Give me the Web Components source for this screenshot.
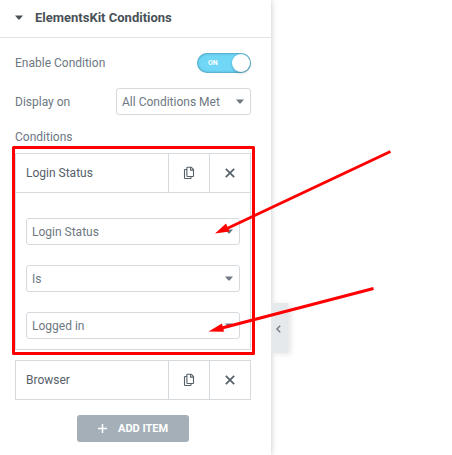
<!DOCTYPE html>
<html lang="en">
<head>
<meta charset="utf-8">
<title>ElementsKit Conditions</title>
<style>
html,body{margin:0;height:100%;overflow:hidden;background:#fff}
body{font-family:Roboto,"Liberation Sans",sans-serif;font-size:12px;color:#6d7882;position:relative}
</style>
</head>
<body>
<ek-panel heading="ElementsKit Conditions">
  <ek-field label="Enable Condition" style="margin-top:15px;height:20px"><ek-switch>ON</ek-switch></ek-field>
  <ek-field label="Display on" style="margin-top:15px;height:27px"><ek-select style="width:135px;--indent:5px">All Conditions Met</ek-select></ek-field>
  <ek-field label="Conditions" style="margin-top:14px;height:16px"></ek-field>
  <ek-item heading="Login Status" style="margin-top:8px">
    <ek-select>Login Status</ek-select>
    <ek-select>Is</ek-select>
    <ek-select>Logged in</ek-select>
  </ek-item>
  <ek-item heading="Browser" style="margin-top:10px"></ek-item>
  <ek-button>ADD ITEM</ek-button>
</ek-panel>
<ek-collapse></ek-collapse>
<ek-annotations></ek-annotations>
<script>
function define(name, html) {
  customElements.define(name, class extends HTMLElement {
    constructor() {
      super();
      const root = this.attachShadow({ mode: 'open' });
      const t = document.createElement('template');
      t.innerHTML = html;
      root.append(t.content.cloneNode(true));
      for (const el of root.querySelectorAll('[data-attr]'))
        el.textContent = this.getAttribute(el.dataset.attr) || '';
      if (this.childElementCount) root.querySelector('.body')?.removeAttribute('hidden');
    }
  });
}

define('ek-panel', `<style>
:host{display:block;box-sizing:border-box;width:271px;height:455px;background:#fff;box-shadow:0 0 6px rgba(0,0,0,.23)}
header{display:flex;align-items:center;box-sizing:border-box;height:38px;padding:0 0 3px 15px;border-bottom:1px solid #e1e4e7;color:#495157;font-weight:700;font-size:13px}
svg{width:8px;height:5px;margin-right:12px}
main{display:flex;flex-direction:column;padding:0 20px 0 15px}
</style>
<header><svg viewBox="0 0 8 5"><path d="M0 .5h8L5 4Q4 5 3 4Z" fill="#495157"/></svg><span data-attr="heading"></span></header>
<main><slot></slot></main>`);

define('ek-field', `<style>
:host{display:flex;align-items:center;justify-content:space-between}
</style><span data-attr="label"></span><slot></slot>`);

define('ek-switch', `<style>
:host{display:flex;align-items:center;justify-content:space-between;box-sizing:border-box;width:54px;height:20px;border-radius:10px;padding:0 1px 0 11px;background:#71d7f7;box-shadow:inset 0 0 2px 1px rgba(40,110,135,.45);color:#fff;font-size:7px;font-weight:700}
i{width:18px;height:18px;border-radius:50%;background:#fff;box-shadow:0 1px 3px rgba(0,0,0,.25)}
</style><span><slot></slot></span><i></i>`);

define('ek-select', `<style>
:host{display:flex;align-items:center;justify-content:space-between;box-sizing:border-box;height:27px;border:1px solid #d5dadf;border-radius:3px;padding:0 6px 0 var(--indent,5px);background:#fff}
svg{width:8px;height:5px}
</style><span><slot></slot></span><svg viewBox="0 0 8 5"><path d="M0 .5h8L5 4Q4 5 3 4Z" fill="#6d7882"/></svg>`);

define('ek-item', `<style>
:host{display:block;border:1px solid #d5dadf}
.head{display:grid;grid-template-columns:1fr 41px 41px;height:38px;color:#556068}
.head>*{display:flex;align-items:center;justify-content:center}
.head>.title{justify-content:flex-start;padding-left:10px}
.tool{border-left:1px solid #d5dadf}
.body{display:grid;gap:20px;padding:25px 10px 10px;border-top:1px solid #d5dadf}
.body[hidden]{display:none}
</style>
<div class="head"><span class="title" data-attr="heading"></span>
<span class="tool"><svg width="12" height="14" viewBox="0 0 12 14" fill="none" stroke="#556068" stroke-width="1.1"><path d="M4.5 1.2h3.800l2.200 2.200v6.500q0 .6-.6.6H4.500q-.6 0-.6-.6V1.800q0-.6.6-.6ZM7.600 1.200v2.900h2.900M3.900 3.500H2.100q-.6 0-.6.6v7.800q0 .6.6.6h5.300q.6 0 .6-.6v-1.400"/></svg></span>
<span class="tool"><svg width="10" height="10" viewBox="0 0 10 10"><path d="M.8.8l8.400 8.400M9.200.8L.8 9.200" stroke="#556068" stroke-width="1.700"/></svg></span></div>
<div class="body" hidden><slot></slot></div>`);

define('ek-button', `<style>
:host{display:flex;align-items:center;align-self:center;box-sizing:border-box;width:112px;height:27px;margin:15px 0 0 0;padding-left:21px;gap:11px;border-radius:3px;background:#a4afb7;color:#fff;font-size:11px;font-weight:700}
svg{margin-top:-1px}
</style><svg width="9" height="9" viewBox="0 0 9 9"><path d="M4.5 0v9M0 4.5h9" stroke="#fff" stroke-width="1.5"/></svg><span><slot></slot></span>`);

define('ek-collapse', `<style>
:host{position:absolute;left:271px;top:303px;width:17px;height:50px;display:flex;align-items:center;box-sizing:border-box;padding:1px 0 0 5px;background:#e6e9ec;box-shadow:3px 1px 5px rgba(0,0,0,.1);clip-path:inset(-8px -10px -10px 0)}
</style><svg width="6" height="8" viewBox="0 0 6 8"><path d="M4.200.8L.9 4l3.300 3.200" fill="none" stroke="#6d7882" stroke-width="1.400"/></svg>`);

define('ek-annotations', `<style>
:host{position:absolute;inset:0;pointer-events:none}
svg{display:block}
</style><svg width="452" height="455" viewBox="0 0 452 455" fill="none" stroke="#f00" stroke-width="3">
<rect x="13.5" y="147.5" width="240" height="206" stroke-linejoin="round"/>
<path d="M390.5 151.5L226 229M373.5 288.500L220 328.500"/>
<path d="M215 233.500L226 223.500L229.500 231.500ZM208.500 331.500L222 323.500L224 331.700Z" fill="#f00" stroke="none"/></svg>`);
</script>
</body>
</html>
